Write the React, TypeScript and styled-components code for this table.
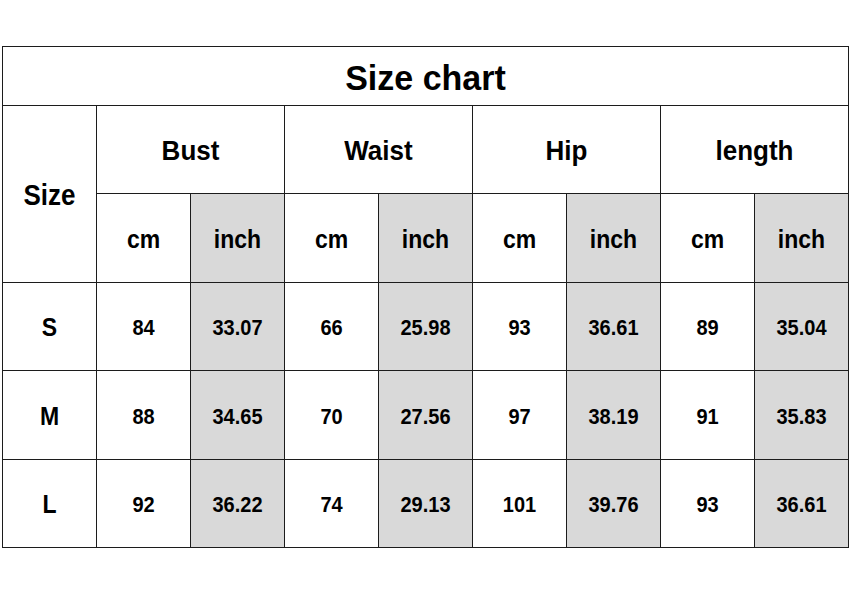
import { FC } from 'react';
import styled, { createGlobalStyle } from 'styled-components';

const GlobalStyle = createGlobalStyle`
    html, body {
        margin: 0;
        padding: 0;
        background: #ffffff;
    }
    body {
        font-family: 'Liberation Sans', Arial, sans-serif;
        color: #000;
    }
`;

const Page = styled('div')`
    width: 850px;
    height: 591px;
    padding: 46px 0 0 2px;
    box-sizing: border-box;
`;

const Chart = styled('div')`
    display: grid;
    grid-template-columns: repeat(9, 94px);
    grid-template-rows: 59px 88px 89px 88px 89px 88px;
    border-top: 1px solid #1c1c1c;
    border-left: 1px solid #1c1c1c;
    width: max-content;
`;

const Cell = styled('div')<{ $shade?: boolean; $span?: number; $rows?: number }>`
    box-sizing: border-box;
    border-right: 1px solid #1c1c1c;
    border-bottom: 1px solid #1c1c1c;
    background: ${(p) => (p.$shade ? '#d9d9d9' : '#ffffff')};
    display: flex;
    align-items: center;
    justify-content: center;
    font-weight: 700;
    font-size: 20px;
    padding-top: 2px;
    grid-column: span ${(p) => p.$span ?? 1};
    grid-row: span ${(p) => p.$rows ?? 1};
`;

// the chart lettering is a touch taller than plain Arial
const Tall = styled('span')<{ $sy?: number }>`
    display: inline-block;
    transform: scaleY(${(p) => p.$sy ?? 1.1});
`;

const Title = styled(Cell)`
    font-size: 34px;
    padding-top: 3px;
`;

const Head = styled(Cell)`
    font-size: 26px;
    padding-top: 3px;
`;

const Unit = styled(Cell)`
    font-size: 23px;
`;

const SizeLabel = styled(Cell)`
    font-size: 23px;
`;

const measures = ['Bust', 'Waist', 'Hip', 'length'];

const rows = [
    { size: 'S', values: ['84', '33.07', '66', '25.98', '93', '36.61', '89', '35.04'] },
    { size: 'M', values: ['88', '34.65', '70', '27.56', '97', '38.19', '91', '35.83'] },
    { size: 'L', values: ['92', '36.22', '74', '29.13', '101', '39.76', '93', '36.61'] },
];

const App: FC = () => (
    <>
        <GlobalStyle />
        <Page>
            <Chart>
                <Title $span={9}><Tall $sy={1.05}>Size chart</Tall></Title>
                <Head $rows={2}><Tall>Size</Tall></Head>
                {measures.map((m) => (
                    <Head key={m} $span={2}><Tall $sy={1.04}>{m}</Tall></Head>
                ))}
                {measures.map((m) => [
                    <Unit key={m + 'cm'}><Tall>cm</Tall></Unit>,
                    <Unit key={m + 'in'} $shade><Tall>inch</Tall></Unit>,
                ])}
                {rows.map((r) => [
                    <SizeLabel key={r.size}><Tall>{r.size}</Tall></SizeLabel>,
                    ...r.values.map((v, i) => (
                        <Cell key={r.size + i} $shade={i % 2 === 1}>
                            <Tall $sy={1.12}>{v}</Tall>
                        </Cell>
                    )),
                ])}
            </Chart>
        </Page>
    </>
);

export default App;
